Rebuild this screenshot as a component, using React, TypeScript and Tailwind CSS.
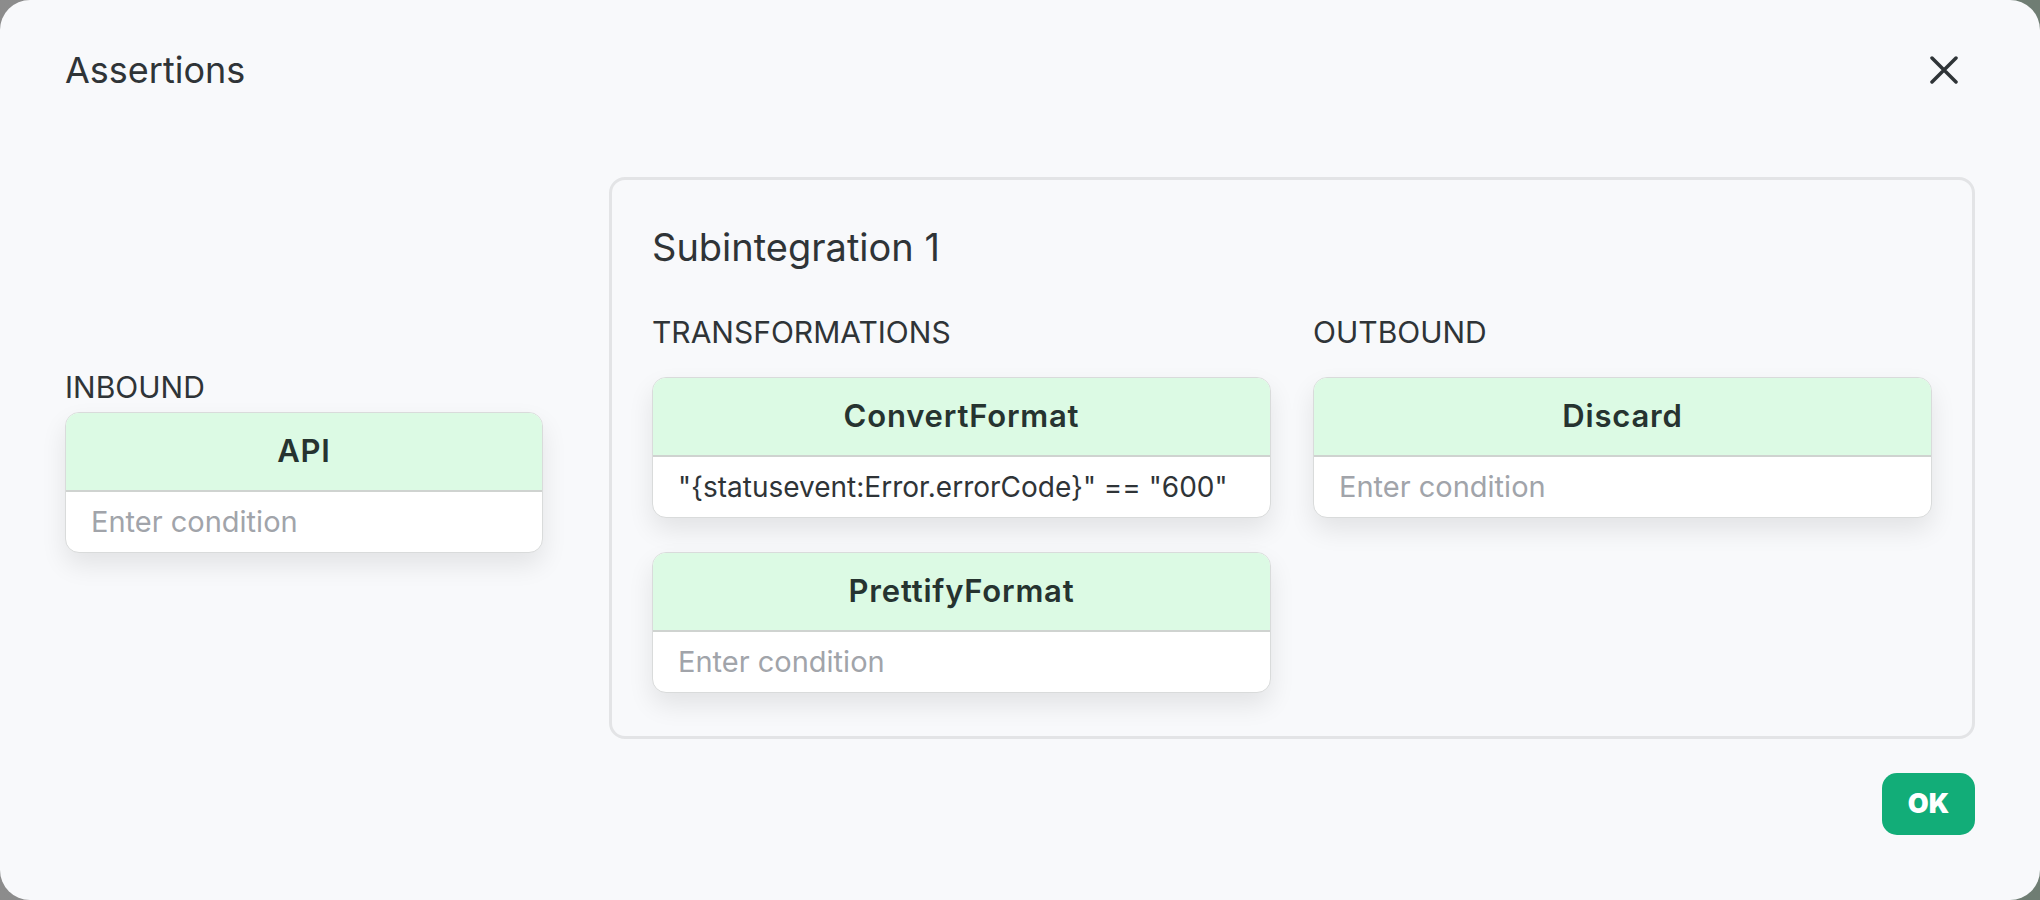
import React from "react";

const font = { fontFamily: "Inter, 'Noto Sans', sans-serif" };

function Card({ title, value }: { title: string; value?: string }) {
  return (
    <div className="w-full rounded-[14px] border border-[#d9dbdb] bg-white shadow-[0_12px_26px_rgba(0,0,0,0.09)] overflow-hidden">
      <div className="h-[79px] bg-[#dcfae4] border-b-2 border-[#cfd3d0] flex items-center justify-center">
        <span className="text-[31px] tracking-[0.8px] font-semibold text-[#263330]">{title}</span>
      </div>
      <div className="h-[60px] flex items-center px-[25px]">
        {value ? (
          <span className="text-[28px] text-[#2f3437]">{value}</span>
        ) : (
          <span className="text-[29px] text-[#a1a4aa]">Enter condition</span>
        )}
      </div>
    </div>
  );
}

export default function App() {
  return (
    <div className="w-[2040px] h-[900px] bg-gradient-to-r from-[#8c8c8c] to-[#6f7d73]" style={font}>
      <div className="h-full rounded-[30px] bg-[#f8f9fb] px-[65px] pt-[50px] pb-[65px] flex flex-col text-[#2f3437]">
        <div className="h-[40px] flex items-center justify-between">
          <h1 className="text-[36px] font-normal leading-[40px] text-[#2f3437]">Assertions</h1>
          <svg width="28" height="28" viewBox="0 0 28 28" className="mr-[17px]">
            <path d="M2 2 L26 26 M26 2 L2 26" stroke="#2f3437" strokeWidth="3.5" strokeLinecap="round" />
          </svg>
        </div>

        <div className="mt-[87px] flex items-center gap-[66px]">
          <div className="w-[478px] flex flex-col pt-[8px]">
            <div className="text-[30px] leading-[32px] text-[#2f3437]">INBOUND</div>
            <div className="mt-[9px]">
              <Card title="API" />
            </div>
          </div>

          <div className="flex-1 h-[562px] border-[3px] border-[#e3e4e6] rounded-[16px] px-[40px] pt-[47px] pb-[41px]">
            <div className="text-[38px] leading-[40px] text-[#2f3437]">Subintegration 1</div>
            <div className="mt-[49px] grid grid-cols-2 gap-x-[42px]">
              <div className="flex flex-col">
                <div className="text-[30px] leading-[32px]">TRANSFORMATIONS</div>
                <div className="mt-[29px] flex flex-col gap-[34px]">
                  <Card title="ConvertFormat" value={'"{statusevent:Error.errorCode}" == "600"'} />
                  <Card title="PrettifyFormat" />
                </div>
              </div>
              <div className="flex flex-col">
                <div className="text-[30px] leading-[32px]">OUTBOUND</div>
                <div className="mt-[29px]">
                  <Card title="Discard" />
                </div>
              </div>
            </div>
          </div>
        </div>

        <div className="mt-[34px] flex justify-end">
          <button className="w-[93px] h-[62px] rounded-[15px] bg-[#12ad78] text-white text-[27px] font-black flex items-center justify-center">
            OK
          </button>
        </div>
      </div>
    </div>
  );
}
